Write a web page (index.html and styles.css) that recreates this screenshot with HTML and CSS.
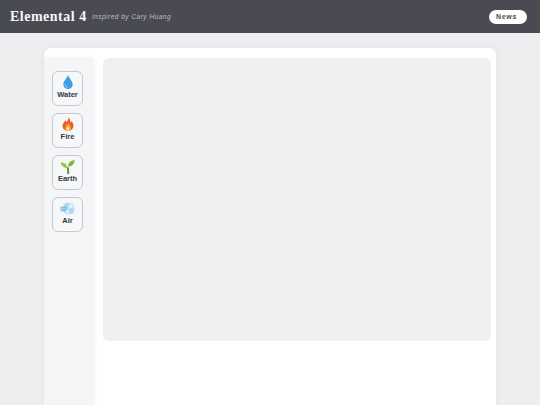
FILE: index.html
```html
<!DOCTYPE html>
<html lang="en">
<head>
<meta charset="utf-8">
<title>Elemental 4</title>
<link rel="stylesheet" href="styles.css">
</head>
<body>
<header class="topbar">
  <div class="brand">
    <h1 class="title">Elemental 4</h1>
    <span class="subtitle">inspired by Cary Huang</span>
  </div>
  <a class="news" href="#">News</a>
</header>
<main class="page">
  <section class="card">
    <aside class="sidebar">
      <button class="element">
        <svg class="icon" viewBox="0 0 18 18"><path d="M9 2C8.200 5 4.300 8.200 4.300 11.400a4.700 4.700 0 0 0 9.400 0C13.700 8.200 9.800 5 9 2z" fill="#3d9fe2"/><path d="M6.200 11.600c0 1.500 1 2.500 2.200 2.700" fill="none" stroke="#a6dbf7" stroke-width="1" stroke-linecap="round"/></svg>
        <span class="label">Water</span>
      </button>
      <button class="element">
        <svg class="icon" viewBox="0 0 18 18"><path d="M9.500 2c.5 2.500-1 3.700-2 5-.5-.6-.7-1.200-.7-1.800C5 6.800 3.500 8.800 3.500 11a5.500 5 0 0 0 11 0c0-2.200-1-3.700-1.900-5-.2.800-.6 1.400-1.200 1.800C11.300 5.500 10.900 3.300 9.500 2z" fill="#e8602a"/><path d="M9.200 8c.2 1.500-2.800 2.600-2.800 5A2.600 2.900 0 0 0 9 16a2.700 2.900 0 0 0 2.600-3c0-2-1.800-3.300-2.400-5z" fill="#fbae3c"/><ellipse cx="9" cy="13.800" rx="1.400" ry="1.900" fill="#fde490"/></svg>
        <span class="label">Fire</span>
      </button>
      <button class="element">
        <svg class="icon" viewBox="0 0 18 18"><path d="M8.200 17c.1-2.400 0-4.700-.5-6.700h2c.4 2.200.6 4.500.4 6.700z" fill="#5b9a30"/><path d="M8.400 11.200C5 10.800 2.200 9 1.500 5.500c3.400-.6 6.500 1.500 6.900 5.700z" fill="#8fca3e"/><path d="M8.900 9.400C9.200 6 11.600 3.400 15.500 3c.3 3.800-2.500 6.700-6.600 6.400z" fill="#7dbb33"/></svg>
        <span class="label">Earth</span>
      </button>
      <button class="element">
        <svg class="icon" viewBox="0 0 18 18"><circle cx="9.500" cy="9.500" r="6" fill="#bfe3f5"/><circle cx="7.500" cy="6.500" r="2.500" fill="#abd9f1"/><circle cx="12.400" cy="12" r="2.500" fill="#abd9f1"/><circle cx="11.600" cy="7.200" r="1.900" fill="#dff2fb"/><circle cx="8.600" cy="12.600" r="1.800" fill="#d9eff9"/><path d="M1.800 8.300h5M1.500 10h6.500M2.200 11.700h4.300" fill="none" stroke="#5fb1e2" stroke-width="1.100" stroke-linecap="round"/></svg>
        <span class="label">Air</span>
      </button>
    </aside>
    <div class="board"></div>
  </section>
</main>
</body>
</html>
```

FILE: styles.css
```css
* {
  box-sizing: border-box;
}

html,
body {
  margin: 0;
  height: 100%;
  overflow: hidden;
}

body {
  background: #eceef0;
  font-family: "Liberation Sans", Arial, sans-serif;
  display: flex;
  flex-direction: column;
}

.topbar {
  height: 33px;
  flex: none;
  background: #4a4a52;
  display: flex;
  align-items: center;
  justify-content: space-between;
  padding: 0 13px 0 10px;
}

.brand {
  display: flex;
  align-items: center;
  gap: 5.5px;
}

.title {
  margin: 0;
  font-family: "Liberation Serif", "Times New Roman", serif;
  font-size: 14px;
  font-weight: 700;
  letter-spacing: 0.5px;
  line-height: 18px;
  color: #f6f6f7;
}

.subtitle {
  font-size: 6.5px;
  font-style: italic;
  letter-spacing: 0.5px;
  line-height: 10px;
  color: #bdbec4;
}

.news {
  width: 38px;
  height: 14px;
  border-radius: 7px;
  background: #fff;
  color: #4a4a52;
  font-size: 7px;
  font-weight: 700;
  letter-spacing: 0.7px;
  line-height: 14px;
  padding-left: 7px;
  text-decoration: none;
}

.page {
  flex: 1;
  min-height: 0;
  padding: 15px 44px 0;
}

.card {
  height: 100%;
  background: #fff;
  border-radius: 7px 7px 0 0;
  box-shadow: 0 0 6px rgba(0, 0, 0, 0.06);
  display: flex;
  gap: 9px;
  padding: 9px 5px 0 0;
}

.sidebar {
  width: 50px;
  flex: none;
  background: #f4f5f7;
  border-radius: 0 5px 0 0;
  box-shadow: 2px 0 3px rgba(244, 245, 247, 0.7);
  display: flex;
  flex-direction: column;
  align-items: flex-start;
  gap: 7px;
  padding: 14px 0 0 8px;
}

.element {
  width: 31px;
  height: 35px;
  padding: 0.5px 0 0;
  background: #f6f7f8;
  border: 1.5px solid #c8c8cc;
  border-radius: 6px;
  display: flex;
  flex-direction: column;
  align-items: center;
  font-family: inherit;
}

.icon {
  width: 18px;
  height: 18px;
  flex: none;
}

.label {
  font-size: 7.5px;
  font-weight: 700;
  line-height: 8px;
  color: #35353c;
}

.board {
  flex: 1;
  height: 283px;
  margin-top: 1px;
  background: #eff0f2;
  border-radius: 6px;
}
```
